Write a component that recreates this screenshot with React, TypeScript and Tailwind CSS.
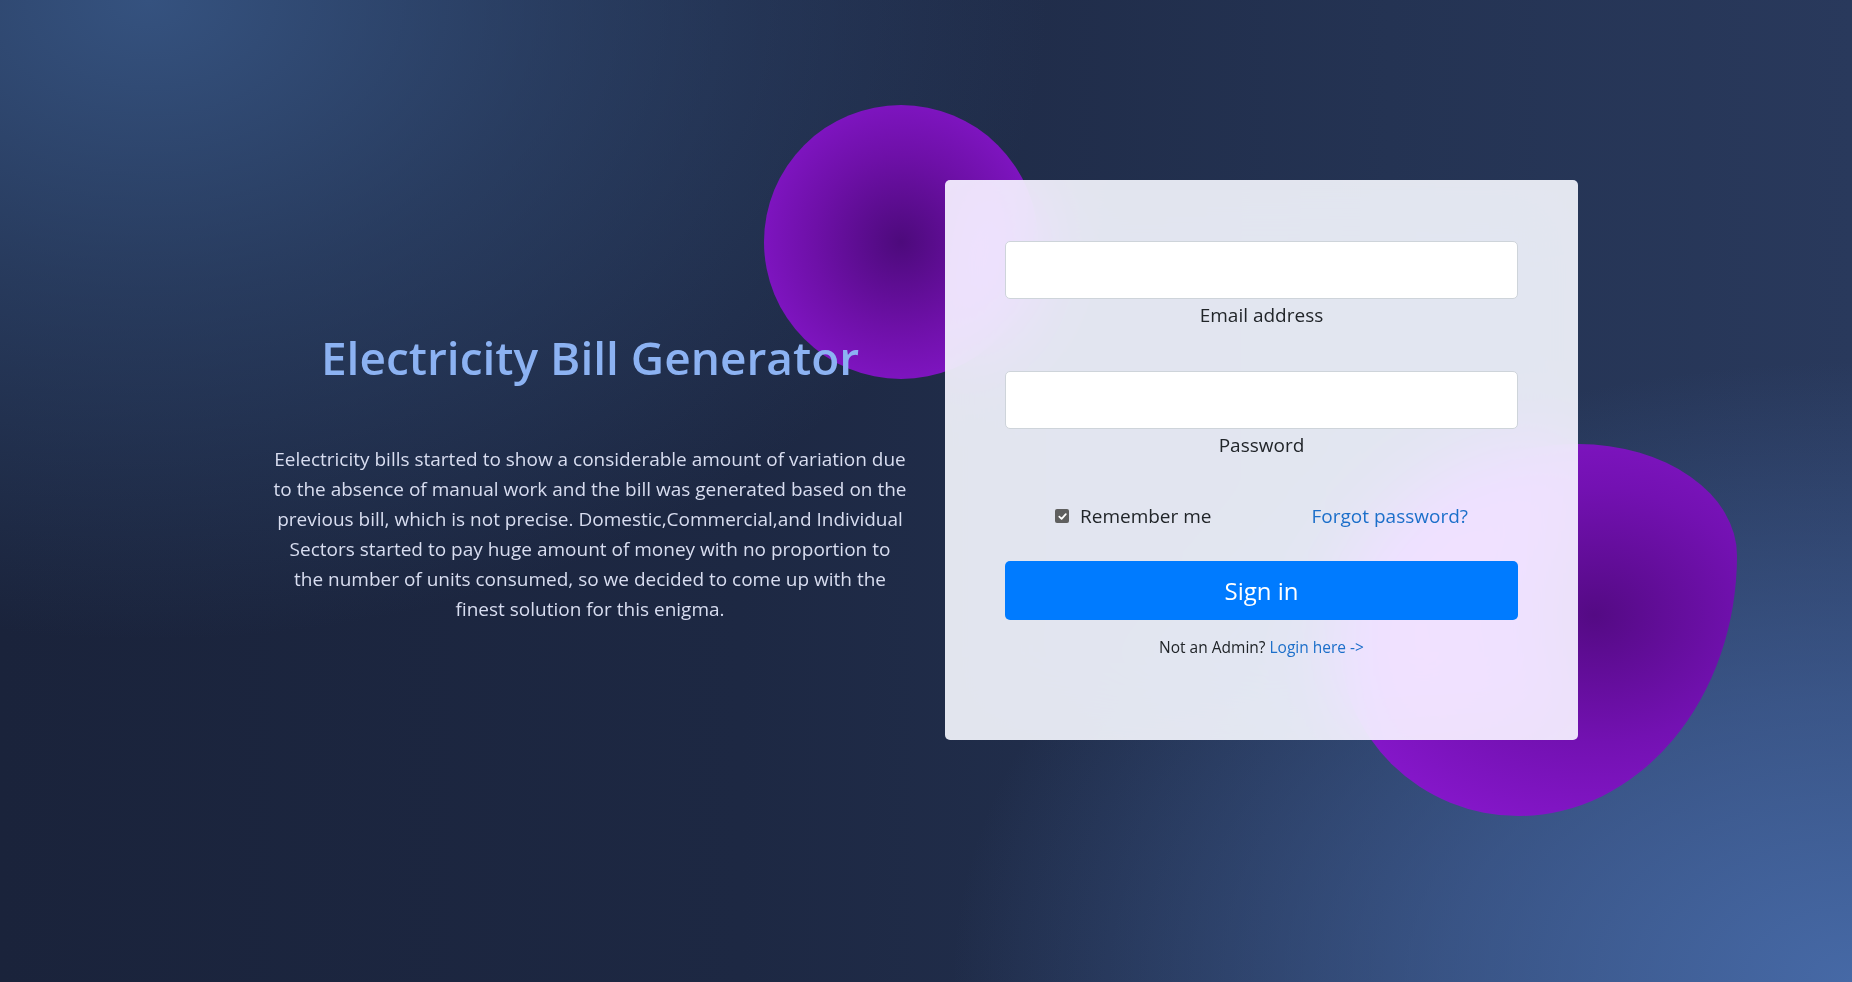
import React from "react";

function CheckBox() {
  return (
    <span className="flex h-[14px] w-[14px] items-center justify-center rounded-[2px] bg-[#5f5f5f]">
      <svg viewBox="0 0 12 12" className="h-[11px] w-[11px]">
        <path d="M2.5 6.2 L5 8.6 L9.6 3.4" fill="none" stroke="#fff" strokeWidth="1.9" strokeLinecap="round" strokeLinejoin="round" />
      </svg>
    </span>
  );
}

function LoginCard() {
  return (
    <div className="relative z-10 flex h-[560px] w-[633px] flex-col rounded-[5px] bg-[rgba(248,250,255,0.9)] px-[60px] pt-[61px] text-[#212529] backdrop-blur-[40px] backdrop-saturate-[1.8]">
      <input type="email" className="h-[58px] w-full rounded-[5px] border border-[#ced4da] bg-white" />
      <label className="mt-[2px] text-center text-[19px] leading-[28px]">Email address</label>

      <input type="password" className="mt-[42px] h-[58px] w-full rounded-[5px] border border-[#ced4da] bg-white" />
      <label className="mt-[2px] text-center text-[19px] leading-[28px]">Password</label>

      <div className="mt-[43px] grid grid-cols-2 text-[19px] leading-[28px]">
        <div className="flex items-center justify-center gap-[11px]">
          <CheckBox />
          <span>Remember me</span>
        </div>
        <div className="flex justify-center">
          <a href="#" className="text-[#1c6fca]">Forgot password?</a>
        </div>
      </div>

      <button className="mt-[31px] h-[59px] w-full rounded-[5px] bg-[#007bff] text-[24px] text-white">Sign in</button>

      <p className="mt-[15px] text-center text-[15.5px] leading-[24px]">
        Not an Admin? <a href="#" className="text-[#1c6fca]">Login here -&gt;</a>
      </p>
    </div>
  );
}

export default function App() {
  return (
    <main className="relative h-[982px] w-full overflow-hidden bg-[image:radial-gradient(ellipse_900px_620px_at_100%_100%,#4669a6_0%,rgba(70,105,166,0.6)_45%,rgba(70,105,166,0)_100%),radial-gradient(ellipse_900px_640px_at_8%_0%,#35527f_0%,rgba(53,82,127,0.5)_45%,rgba(53,82,127,0)_100%),linear-gradient(to_right,#1a233b_0%,#1d2843_40%,#243353_75%,#29395c_100%)] font-['Open_Sans',sans-serif]">
      {/* purple blobs behind the card */}
      <div className="absolute left-[764px] top-[105px] h-[274px] w-[274px] rounded-full bg-[radial-gradient(circle_at_50%_50%,#4d0a7c_0%,#6e10a8_45%,#8f19d9_100%)]" />
      <div className="absolute left-[1340px] top-[444px] h-[372px] w-[397px] rounded-[60%_40%_55%_45%/53%_30%_70%_47%] bg-[radial-gradient(ellipse_at_64%_46%,#540a84_0%,#7311b2_45%,#911ad9_100%)]" />

      <div className="relative flex justify-center gap-[39px] pt-[180px]">
        <div className="w-[632px] pt-[149px] text-center">
          <h1 className="text-[46px] font-semibold leading-[56px] text-[#8cb2f2]">Electricity Bill Generator</h1>
          <p className="-mx-[30px] mt-[59px] text-[19px] leading-[30px] text-[#d8ddf0]">
            Eelectricity bills started to show a considerable amount of variation due
            <br />
            to the absence of manual work and the bill was generated based on the
            <br />
            previous bill, which is not precise. Domestic,Commercial,and Individual
            <br />
            Sectors started to pay huge amount of money with no proportion to
            <br />
            the number of units consumed, so we decided to come up with the
            <br />
            finest solution for this enigma.
          </p>
        </div>
        <LoginCard />
      </div>
    </main>
  );
}
